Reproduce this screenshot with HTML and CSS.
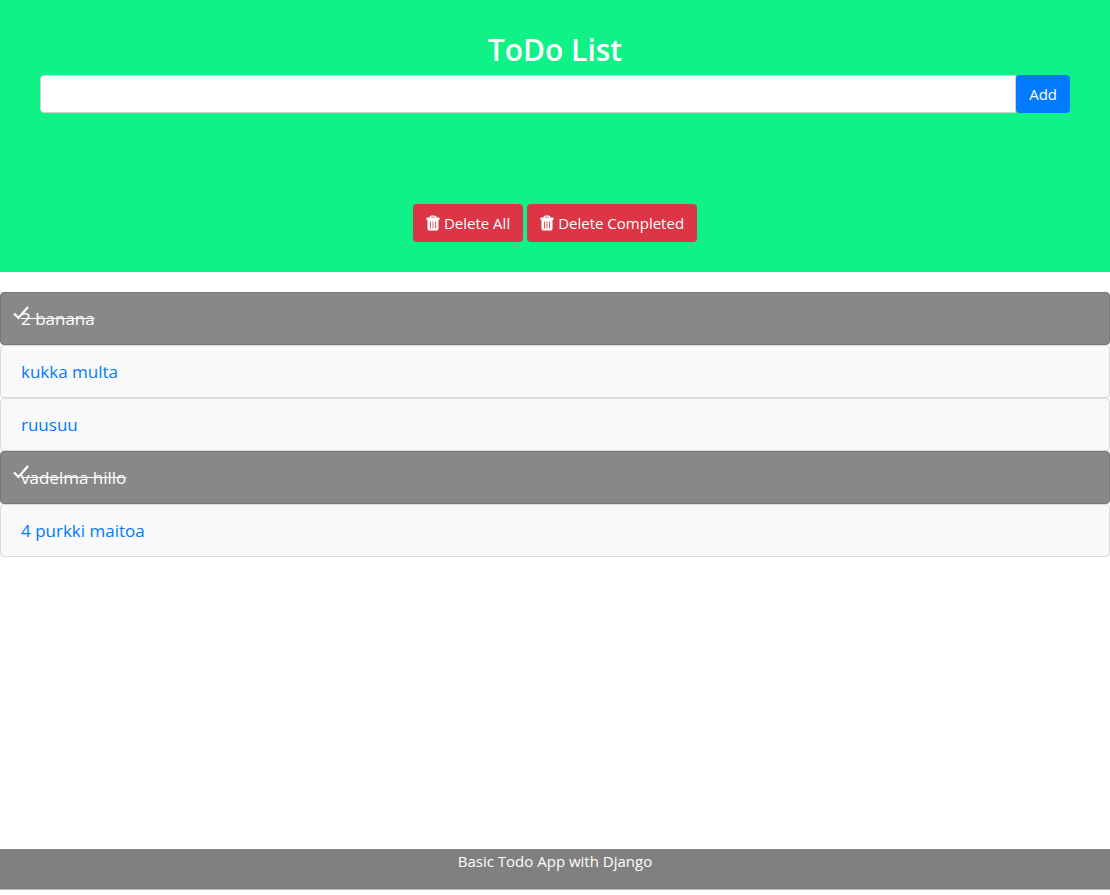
FILE: index.html
```html
<!DOCTYPE html>
<html lang="en">
<head>
<meta charset="utf-8">
<title>ToDo List</title>
<link rel="stylesheet" href="styles.css">
</head>
<body>
<svg class="sprite" aria-hidden="true">
  <symbol id="trash" viewBox="0 0 14 16">
    <path fill="currentColor" fill-rule="evenodd" d="M3.500 2.500V1.800L5 .5h4l1.500 1.300v.7H13.500V5H.5V2.500zM5.200 2.500h3.600V1.800H5.200zM1.500 5h11v9l-1 1.500h-9l-1-1.500zM4 6.500v7h.8v-7zM6.600 6.500v7h.8v-7zM9.200 6.500v7h.8v-7z"/>
  </symbol>
  <symbol id="check" viewBox="0 0 16 14">
    <path fill="none" stroke="currentColor" stroke-width="2.200" d="M1 7.500 5.500 12 15 1"/>
  </symbol>
</svg>
<header class="header">
  <h1 class="title">ToDo List</h1>
  <form class="add-form">
    <input class="add-input" type="text" name="text" aria-label="New todo">
    <button class="btn btn-primary" type="submit">Add</button>
  </form>
  <div class="actions">
    <button class="btn btn-danger" type="button"><svg class="icon" aria-hidden="true"><use href="#trash"/></svg>Delete All</button>
    <button class="btn btn-danger" type="button"><svg class="icon" aria-hidden="true"><use href="#trash"/></svg>Delete Completed</button>
  </div>
</header>
<main class="main">
  <ul class="list">
    <li class="item item-done"><svg class="check" aria-hidden="true"><use href="#check"/></svg>2 banana</li>
    <li class="item"><a class="link" href="#">kukka multa</a></li>
    <li class="item"><a class="link" href="#">ruusuu</a></li>
    <li class="item item-done"><svg class="check" aria-hidden="true"><use href="#check"/></svg>vadelma hillo</li>
    <li class="item"><a class="link" href="#">4 purkki maitoa</a></li>
  </ul>
</main>
<footer class="footer">Basic Todo App with Django</footer>
</body>
</html>
```
FILE: styles.css
```css
* {
  box-sizing: border-box;
}

body {
  display: flex;
  flex-direction: column;
  min-height: 100vh;
  margin: 0;
  padding-bottom: 5px;
  background: #fff;
  color: #fff;
  font-family: "Segoe UI", "Open Sans", "Noto Sans", sans-serif;
  font-size: 15px;
  line-height: 24px;
}

.sprite {
  display: none;
}

.header {
  padding: 30px 40px;
  background: #10f187;
  text-align: center;
}

.title {
  margin: 0 0 6px;
  font-size: 30px;
  font-weight: 600;
  line-height: 39px;
}

.add-form {
  display: flex;
}

.add-input {
  flex: 1;
  min-width: 0;
  height: 38px;
  padding: 6px 12px;
  border: 1px solid #ced4da;
  border-radius: 4px 0 0 4px;
  background: #fff;
  color: #495057;
  font: inherit;
}

.btn {
  display: inline-flex;
  align-items: center;
  gap: 4px;
  height: 38px;
  padding: 0 13px;
  border: 0;
  border-radius: 4px;
  color: #fff;
  font: inherit;
  cursor: pointer;
}

.btn-primary {
  background: #007bff;
}

.btn-danger {
  background: #dc3545;
}

.icon {
  width: 14px;
  height: 16px;
}

.actions {
  display: flex;
  justify-content: center;
  gap: 4px;
  margin-top: 91px;
}

.main {
  flex: 1;
  padding: 20px 0;
}

.list {
  margin: 0;
  padding: 0;
  list-style: none;
}

.item {
  position: relative;
  padding: 12px 20px;
  border: 1px solid #dadada;
  border-radius: 4px;
  background: #f9f9f9;
  font-size: 17px;
  line-height: 27px;
}

.item-done {
  border-color: #777;
  background: #888;
  text-decoration: line-through;
}

.check {
  position: absolute;
  top: 13px;
  left: 12px;
  width: 16px;
  height: 14px;
}

.link {
  color: #007bff;
  text-decoration: none;
}

.footer {
  height: 41px;
  border-bottom: 1px solid #b5b5b5;
  background: #808080;
  text-align: center;
}
```
